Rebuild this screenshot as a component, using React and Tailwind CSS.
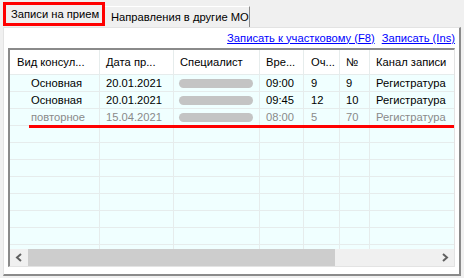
import React from "react";

const cols = "grid-cols-[90px_74px_86px_44px_36px_30px_86px]";

function Pill() {
  return <div className="h-[9px] w-[74px] rounded-full bg-[#c4c4c4]" />;
}

function Row({ data, muted }) {
  const tc = muted ? "text-[#8a8a8a]" : "text-black";
  return (
    <div className={`grid ${cols} h-[17px] bg-[#f0ffff] ${tc}`}>
      <div className="border-r border-b border-[#e6ecec] pl-[21px] leading-[16px]">{data[0]}</div>
      <div className="border-r border-b border-[#e6ecec] pl-[6px] leading-[16px]">{data[1]}</div>
      <div className="border-r border-b border-[#e6ecec] pl-[5px] flex items-center">
        <Pill />
      </div>
      <div className="border-r border-b border-[#e6ecec] pl-[6px] leading-[16px]">{data[2]}</div>
      <div className="border-r border-b border-[#e6ecec] pl-[7px] leading-[16px]">{data[3]}</div>
      <div className="border-r border-b border-[#e6ecec] pl-[6px] leading-[16px]">{data[4]}</div>
      <div className="border-b border-[#e6ecec] pl-[6px] leading-[16px] whitespace-nowrap overflow-hidden">{data[5]}</div>
    </div>
  );
}

function EmptyRow() {
  return (
    <div className={`grid ${cols} h-[17px] bg-[#f0ffff] shrink-0`}>
      <div className="border-r border-b border-[#e6ecec]" />
      <div className="border-r border-b border-[#e6ecec]" />
      <div className="border-r border-b border-[#e6ecec]" />
      <div className="border-r border-b border-[#e6ecec]" />
      <div className="border-r border-b border-[#e6ecec]" />
      <div className="border-r border-b border-[#e6ecec]" />
      <div className="border-b border-[#e6ecec]" />
    </div>
  );
}

export default function App() {
  const headers = [
    ["Вид консул...", "pl-[7px]"],
    ["Дата пр...", "pl-[6px]"],
    ["Специалист", "pl-[6px]"],
    ["Вре...", "pl-[6px]"],
    ["Оч...", "pl-[7px]"],
    ["№", "pl-[6px]"],
    ["Канал записи", "pl-[6px]"],
  ];
  return (
    <div
      className="w-[464px] h-[278px] bg-[#f0f0f0] overflow-hidden text-[11.2px] text-black"
      style={{ fontFamily: '"Liberation Sans", Arial, sans-serif' }}
    >
      {/* tabs */}
      <div className="flex items-end h-[27px] pl-[3px]">
        <div className="h-[24px] w-[102px] border-[3px] border-[#ff0000] bg-[#f0f0f0] flex items-center pl-[5px] mb-[1px] z-10 whitespace-nowrap">
          Записи на прием
        </div>
        <div className="h-[21px] w-[145px] border-t border-t-white border-r border-r-[#8a8a8a] bg-[#f0f0f0] flex items-center pl-[6px] whitespace-nowrap">
          Направления в другие МО
        </div>
      </div>
      {/* panel */}
      <div className="mx-[3px] h-[249px] bg-white border-l border-t border-l-[#e3e3e3] border-t-[#e3e3e3] border-r-2 border-b-2 border-r-[#8a8a8a] border-b-[#8a8a8a] flex flex-col">
        <div className="h-[20px] flex items-center justify-end gap-[7px] pr-[4px]">
          <span className="text-[#0000ff] underline">Записать к участковому (F8)</span>
          <span className="text-[#0000ff] underline">Записать (Ins)</span>
        </div>
        <div className="mx-[4px] h-[219px] border-l-2 border-t-2 border-l-[#8a8a8a] border-t-[#8a8a8a] border-r border-b border-r-[#e3e3e3] border-b-[#e3e3e3] flex flex-col overflow-hidden">
          <div className={`grid ${cols} h-[25px] bg-white shrink-0`}>
            {headers.map(([h, p], i) => (
              <div
                key={i}
                className={`${p} flex items-center whitespace-nowrap border-b border-[#e6ecec] ${i < 6 ? "border-r" : ""}`}
              >
                {h}
              </div>
            ))}
          </div>
          <div className="relative flex-1 overflow-hidden flex flex-col">
            <Row data={["Основная", "20.01.2021", "09:00", "9", "9", "Регистратура"]} />
            <Row data={["Основная", "20.01.2021", "09:45", "12", "10", "Регистратура"]} />
            <Row muted data={["повторное", "15.04.2021", "08:00", "5", "70", "Регистратура"]} />
            {Array.from({ length: 8 }).map((_, i) => (
              <EmptyRow key={i} />
            ))}
            <div className="absolute left-[19px] top-[50px] w-[425px] h-[3px] bg-[#ff0000]" />
          </div>
          {/* scrollbar */}
          <div className="h-[17px] shrink-0 bg-[#f0f0f0] flex items-center">
            <div className="w-[18px] h-[17px] flex items-center justify-center">
              <svg width="8" height="9" viewBox="0 0 8 9">
                <path d="M6 1 L2 4.5 L6 8" stroke="#606060" strokeWidth="2" fill="none" />
              </svg>
            </div>
            <div className="w-[307px] h-[17px] bg-[#cdcdcd]" />
            <div className="flex-1" />
            <div className="w-[18px] h-[17px] flex items-center justify-center">
              <svg width="8" height="9" viewBox="0 0 8 9">
                <path d="M2 1 L6 4.5 L2 8" stroke="#606060" strokeWidth="2" fill="none" />
              </svg>
            </div>
          </div>
        </div>
      </div>
    </div>
  );
}
